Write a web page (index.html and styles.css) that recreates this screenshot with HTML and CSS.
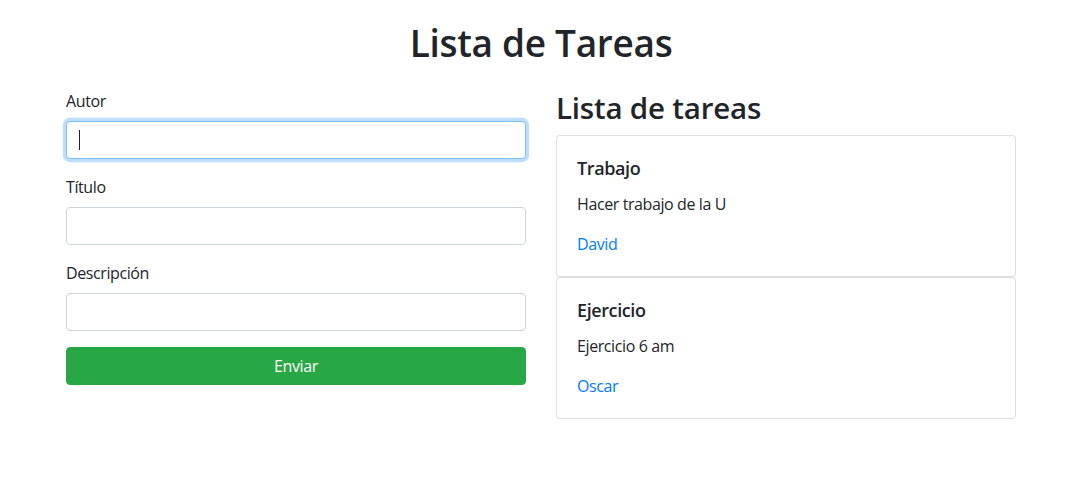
FILE: index.html
```html
<!DOCTYPE html>
<html lang="es">
<head>
<meta charset="utf-8">
<title>Lista de Tareas</title>
<link rel="stylesheet" href="styles.css">
</head>
<body>
<div class="page">
  <h1 class="title">Lista de Tareas</h1>
  <div class="row">
    <form class="form">
      <div class="form-group">
        <label class="label" for="autor">Autor</label>
        <div class="field focused">
          <input class="input input-focus" id="autor" type="text">
        </div>
      </div>
      <div class="form-group">
        <label class="label" for="titulo">Título</label>
        <div class="field">
          <input class="input" id="titulo" type="text">
        </div>
      </div>
      <div class="form-group">
        <label class="label" for="desc">Descripción</label>
        <div class="field">
          <input class="input" id="desc" type="text">
        </div>
      </div>
      <button class="btn" type="button">Enviar</button>
    </form>
    <div class="list">
      <h2 class="list-title">Lista de tareas</h2>
      <div class="card">
        <h5 class="card-title">Trabajo</h5>
        <p class="card-text">Hacer trabajo de la U</p>
        <p class="card-link"><a href="#">David</a></p>
      </div>
      <div class="card">
        <h5 class="card-title">Ejercicio</h5>
        <p class="card-text">Ejercicio 6 am</p>
        <p class="card-link"><a href="#">Oscar</a></p>
      </div>
    </div>
  </div>
</div>
</body>
</html>
```

FILE: styles.css
```css
* { box-sizing: border-box; }
html, body { margin: 0; padding: 0; background: #fff; }
body {
  font-family: "Open Sans", "Noto Sans", sans-serif;
  font-size: 16px;
  line-height: 1.5;
  letter-spacing: -0.4px;
  color: #212529;
}
.page {
  width: 950px;
  margin-left: 66px;
}
.title {
  margin: 19px 0 22px;
  font-size: 37px;
  font-weight: 600;
  line-height: 48px;
  letter-spacing: -0.3px;
  text-align: center;
}
.row {
  display: grid;
  grid-template-columns: 460px 460px;
  column-gap: 30px;
  align-items: start;
}
.form-group { margin-bottom: 16px; }
.label {
  display: block;
  margin-bottom: 8px;
  line-height: 24px;
}
.field { position: relative; }
.input {
  display: block;
  width: 100%;
  height: 38px;
  padding: 6px 12px;
  font: inherit;
  color: #495057;
  background: #fff;
  border: 1px solid #ced4da;
  border-radius: 4px;
  outline: none;
}
.input-focus {
  border-color: #80bdff;
  box-shadow: 0 0 0 3.2px rgba(0, 123, 255, .25);
}
.focused::after {
  content: "";
  position: absolute;
  left: 13px;
  top: 9px;
  width: 1px;
  height: 20px;
  background: #212529;
}
.btn {
  display: block;
  width: 100%;
  height: 38px;
  padding: 6px 12px;
  font: inherit;
  letter-spacing: -0.4px;
  color: #fff;
  background: #28a745;
  border: 1px solid #28a745;
  border-radius: 4px;
}
.list-title {
  margin: 0 0 8px;
  font-size: 29.5px;
  font-weight: 600;
  line-height: 38.4px;
  letter-spacing: -0.2px;
}
.card {
  padding: 20px;
  border: 1px solid rgba(0, 0, 0, .125);
  border-radius: 4px;
  background: #fff;
}
.card-title {
  margin: 0 0 12px;
  font-size: 18px;
  font-weight: 600;
  line-height: 24px;
}
.card-text { margin: 0 0 16px; }
.card-link { margin: 0; }
.card-link a { color: #007bff; text-decoration: none; }
```
